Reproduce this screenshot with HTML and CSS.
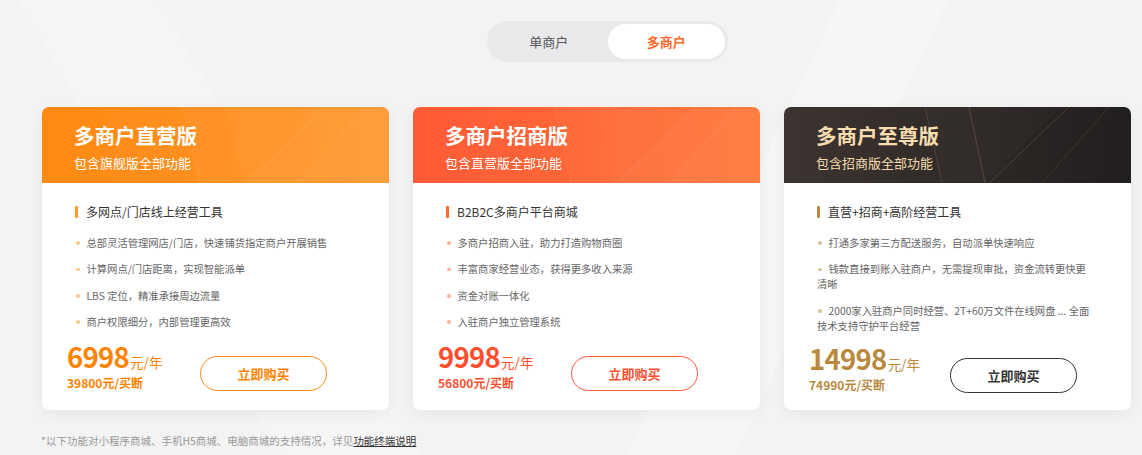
FILE: index.html
```html
<!DOCTYPE html>
<html lang="zh-CN">
<head>
<meta charset="utf-8">
<title>多商户</title>
<link rel="stylesheet" href="styles.css">
</head>
<body>
<div class="page">
  <div class="tabs-row">
    <div class="tabs">
      <div class="tab">单商户</div>
      <div class="tab active">多商户</div>
    </div>
  </div>

  <div class="cards">
    <div class="card c1">
      <div class="head">
        <svg class="deco" viewBox="0 0 347 76" preserveAspectRatio="none">
          <polygon points="141,0 347,0 347,76 158,76" fill="#fff" opacity="0.03"/>
          <polygon points="185,0 347,0 347,76 201,76" fill="#fff" opacity="0.02"/>
          <polygon points="200,76 278,0 347,0 347,76" fill="#fff" opacity="0.025"/>
          <polygon points="250,76 320,0 347,0 347,76" fill="#fff" opacity="0.02"/>
          <line x1="141" y1="0" x2="158" y2="76" stroke="#fff" stroke-opacity="0.08" stroke-width="1"/>
          <line x1="205" y1="76" x2="285" y2="0" stroke="#fff" stroke-opacity="0.1" stroke-width="1"/>
          <line x1="258" y1="76" x2="325" y2="0" stroke="#fff" stroke-opacity="0.08" stroke-width="1"/>
        </svg>
        <div class="title">多商户直营版</div>
        <div class="sub">包含旗舰版全部功能</div>
      </div>
      <div class="body">
        <div class="sec"><i class="bar"></i>多网点/门店线上经营工具</div>
        <ul class="list">
          <li><i class="dot"></i>总部灵活管理网店/门店，快速铺货指定商户开展销售</li>
          <li><i class="dot"></i>计算网点/门店距离，实现智能派单</li>
          <li><i class="dot"></i>LBS 定位，精准承接周边流量</li>
          <li><i class="dot"></i>商户权限细分，内部管理更高效</li>
        </ul>
        <div class="buy">
          <div class="price">
            <div class="main"><b>6998</b><span>元/年</span></div>
            <div class="once">39800元/买断</div>
          </div>
          <a class="btn">立即购买</a>
        </div>
      </div>
    </div>

    <div class="card c2">
      <div class="head">
        <svg class="deco" viewBox="0 0 347 76" preserveAspectRatio="none">
          <polygon points="141,0 347,0 347,76 158,76" fill="#fff" opacity="0.03"/>
          <polygon points="185,0 347,0 347,76 201,76" fill="#fff" opacity="0.02"/>
          <polygon points="200,76 278,0 347,0 347,76" fill="#fff" opacity="0.025"/>
          <polygon points="250,76 320,0 347,0 347,76" fill="#fff" opacity="0.02"/>
          <line x1="141" y1="0" x2="158" y2="76" stroke="#fff" stroke-opacity="0.08" stroke-width="1"/>
          <line x1="205" y1="76" x2="285" y2="0" stroke="#fff" stroke-opacity="0.1" stroke-width="1"/>
          <line x1="258" y1="76" x2="325" y2="0" stroke="#fff" stroke-opacity="0.08" stroke-width="1"/>
        </svg>
        <div class="title">多商户招商版</div>
        <div class="sub">包含直营版全部功能</div>
      </div>
      <div class="body">
        <div class="sec"><i class="bar"></i>B2B2C多商户平台商城</div>
        <ul class="list">
          <li><i class="dot"></i>多商户招商入驻，助力打造购物商圈</li>
          <li><i class="dot"></i>丰富商家经营业态，获得更多收入来源</li>
          <li><i class="dot"></i>资金对账一体化</li>
          <li><i class="dot"></i>入驻商户独立管理系统</li>
        </ul>
        <div class="buy">
          <div class="price">
            <div class="main"><b>9998</b><span>元/年</span></div>
            <div class="once">56800元/买断</div>
          </div>
          <a class="btn">立即购买</a>
        </div>
      </div>
    </div>

    <div class="card c3">
      <div class="head">
        <svg class="deco" viewBox="0 0 347 76" preserveAspectRatio="none">
          <polygon points="141,0 347,0 347,76 158,76" fill="#fff" opacity="0.015"/>
          <line x1="141" y1="0" x2="158" y2="76" stroke="#c9a26a" stroke-opacity="0.2" stroke-width="1"/>
          <line x1="185" y1="0" x2="201" y2="76" stroke="#c9a26a" stroke-opacity="0.25" stroke-width="1"/>
          <line x1="205" y1="76" x2="285" y2="0" stroke="#c9a26a" stroke-opacity="0.25" stroke-width="1"/>
          <line x1="258" y1="76" x2="325" y2="0" stroke="#c9a26a" stroke-opacity="0.15" stroke-width="1"/>
          <polygon points="200,76 278,0 347,0 347,76" fill="#000" opacity="0.06"/>
        </svg>
        <div class="title">多商户至尊版</div>
        <div class="sub">包含招商版全部功能</div>
      </div>
      <div class="body">
        <div class="sec"><i class="bar"></i>直营+招商+高阶经营工具</div>
        <ul class="list">
          <li><i class="dot"></i>打通多家第三方配送服务，自动派单快速响应</li>
          <li><i class="dot"></i>钱款直接到账入驻商户，无需提现审批，资金流转更快更清晰</li>
          <li><i class="dot"></i>2000家入驻商户同时经营、2T+60万文件在线网盘 ... 全面技术支持守护平台经营</li>
        </ul>
        <div class="buy">
          <div class="price">
            <div class="main"><b>14998</b><span>元/年</span></div>
            <div class="once">74990元/买断</div>
          </div>
          <a class="btn">立即购买</a>
        </div>
      </div>
    </div>
  </div>

  <p class="note">*以下功能对小程序商城、手机H5商城、电脑商城的支持情况，详见<a>功能终端说明</a></p>
</div>
</body>
</html>
```

FILE: styles.css
```css
* { box-sizing: border-box; }
html, body {
  margin: 0;
  padding: 0;
}
body {
  width: 1142px;
  height: 455px;
  overflow: hidden;
  font-family: "Noto Sans CJK SC", "Noto Sans", sans-serif;
  color: #333;
  background-color: #f3f3f3;
  background-image:
    linear-gradient(115deg, rgba(255,255,255,0) 0 62%, rgba(255,255,255,0.25) 62% 70%, rgba(255,255,255,0) 70%),
    linear-gradient(60deg, rgba(255,255,255,0) 0 20%, rgba(255,255,255,0.2) 20% 30%, rgba(255,255,255,0) 30%);
}
.page {
  padding-top: 21px;
}
.tabs-row {
  display: flex;
  justify-content: center;
  padding-left: 73px;
}
.tabs {
  display: flex;
  width: 241px;
  height: 41px;
  padding: 3px;
  border-radius: 21px;
  background: #e9e9eb;
}
.tab {
  flex: 1;
  display: flex;
  align-items: center;
  justify-content: center;
  font-size: 13px;
  color: #555;
  border-radius: 18px;
}
.tab.active {
  background: #fff;
  color: #ff6a2b;
  font-weight: 700;
}

.cards {
  display: flex;
  gap: 24px;
  padding-left: 42px;
  margin-top: 45px;
}
.card {
  width: 347px;
  height: 303px;
  background: #fff;
  border-radius: 7px;
  overflow: hidden;
  display: flex;
  flex-direction: column;
  box-shadow: 0 4px 14px rgba(0,0,0,0.05);
}
.head {
  position: relative;
  height: 76px;
  padding: 14px 20px 0 32px;
  color: #fff;
  flex: none;
}
.c1 .head { background: linear-gradient(90deg, #ff8a12 0%, #ff9022 55%, #ff962a 100%); }
.c2 .head { background: linear-gradient(90deg, #ff5a37 0%, #ff6936 55%, #ff7334 100%); }
.c3 .head { background: linear-gradient(90deg, #3c3431 0%, #2e2927 55%, #221e1e 100%); color: #f6dcae; }
.deco {
  position: absolute;
  left: 0;
  top: 0;
  width: 100%;
  height: 100%;
}
.title {
  position: relative;
  font-size: 20.5px;
  font-weight: 700;
  line-height: 28px;
}
.sub {
  position: relative;
  margin-top: 5px;
  font-size: 13px;
  line-height: 18px;
}

.body {
  flex: 1;
  display: flex;
  flex-direction: column;
  padding: 20px 38px 19px 33px;
}
.sec {
  display: flex;
  align-items: center;
  font-size: 12px;
  line-height: 17px;
  color: #333;
}
.bar {
  width: 3px;
  height: 12px;
  border-radius: 1px;
  margin-right: 8px;
}
.c1 .bar { background: #ff9a2e; }
.c2 .bar { background: #ff6a2b; }
.c3 .bar { background: #b98a3e; }

.list {
  list-style: none;
  margin: 15px 0 0;
  padding: 0;
}
.list li {
  font-size: 10.3px;
  line-height: 15px;
  color: #666;
  margin-bottom: 11.3px;
}
.dot {
  display: inline-block;
  width: 3.5px;
  height: 3.5px;
  border-radius: 50%;
  margin: 0 7px 0 1px;
  vertical-align: middle;
  position: relative;
  top: -1px;
}
.c1 .dot { background: #fcc98f; }
.c2 .dot { background: #ffb49a; }
.c3 .dot { background: #dcc49c; }

.buy {
  margin-top: auto;
  margin-left: -8px;
  display: flex;
  align-items: flex-start;
  gap: 30px;
}
.price {
  min-width: 103px;
}
.main {
  display: flex;
  align-items: baseline;
  white-space: nowrap;
  height: 28px;
}
.main b {
  font-size: 27.5px;
  font-weight: 700;
  line-height: 28px;
  letter-spacing: -0.7px;
}
.main span {
  font-size: 13.5px;
  line-height: 16px;
  margin-left: 1px;
}
.once {
  margin-top: 5px;
  font-size: 12px;
  font-weight: 700;
  line-height: 16px;
}
.c1 .price { color: #ff8200; }
.c2 .price { color: #ff4f30; }
.c3 .price { color: #b98a3e; }

.btn {
  margin-top: 14px;
  width: 127px;
  height: 35px;
  border-radius: 18px;
  border: 1px solid;
  display: flex;
  align-items: center;
  justify-content: center;
  font-size: 13px;
  font-weight: 700;
  cursor: pointer;
}
.c1 .btn { color: #ff8200; border-color: #ff8a1a; }
.c2 .btn { color: #ff4f30; border-color: #ff5a3c; }
.c3 .btn { color: #333; border-color: #333; }

.note {
  margin: 24px 0 0 41px;
  font-size: 10.5px;
  line-height: 14px;
  color: #999;
}
.note a {
  color: #333;
  text-decoration: underline;
}
```
